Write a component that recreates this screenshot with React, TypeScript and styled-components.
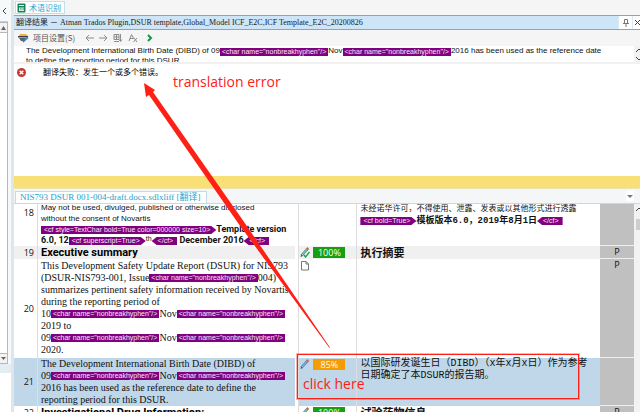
import React from "react";
import styled, { createGlobalStyle, css } from "styled-components";

const CJK = '"Noto Sans CJK SC", sans-serif';
const SANS = `"Liberation Sans", ${CJK}`;
const NARROW = `Roboto, ${CJK}`;
const SERIF = '"Liberation Serif", "Noto Sans CJK SC", serif';
const MONO = '"Liberation Mono", "Noto Sans CJK SC", monospace';

const Global = createGlobalStyle`
  *, *::before, *::after { box-sizing: border-box; }
  html, body { margin: 0; overflow: hidden; }
  body { font-family: ${SANS}; font-size: 10px; line-height: 12px; color: #111; background: #f5f6f7; }
  button { font: inherit; color: inherit; border: 0; padding: 0; margin: 0; background: none; display: inline-flex; align-items: center; justify-content: center; }
  svg { display: block; flex: none; }
`;

const Window = styled.div`
  position: relative;
  display: flex;
  height: 100vh;
  overflow: hidden;
`;

/* ---- left side pane ---- */
const Side = styled.aside`
  flex: none;
  width: 14px;
  display: flex;
  flex-direction: column;
  background: #f6f8f9;
  border-right: 3px solid #dce6eb;
`;
const SideHead = styled.button`
  && { height: 22px; width: 8px; border-bottom: 1px solid #c9ced1; }
`;
const SideScroll = styled.div`
  flex: 1;
  width: 8px;
  display: flex;
  flex-direction: column;
  justify-content: space-between;
  background: #fff;
  border-right: 1px solid #b4b8bb;
`;
const SideArrow = styled.button`
  && { height: 11px; background: #f3f3f3; border: 1px solid #b4b8bb; border-width: 1px 0; }
`;
const SideFoot = styled.div`
  height: 48px;
  background: #fff;
  border-top: 9px solid #e4edf1;
`;

/* ---- main column ---- */
const Main = styled.main`
  flex: 1;
  min-width: 0;
  display: flex;
  flex-direction: column;
`;
const TopTabs = styled.div`
  flex: none;
  display: flex;
  height: 15px;
  padding: 1px 0 1px 1px;
  background: #f5f5f5;
`;
const TopTab = styled.button`
  && {
    gap: 3px;
    padding: 0 3px 0 1px;
    background: #fff;
    border: 1px solid #c3dfe8;
    color: #1f9fc9;
    font: 8px/12px ${CJK};
  }
`;
const TitleBar = styled.header`
  flex: none;
  display: flex;
  height: 15px;
  background: #cde5f7;
  border: solid #58b9dd;
  border-width: 1px 0;
  color: #222;
`;
const Title = styled.h1`
  flex: 1;
  margin: 0;
  padding-left: 2px;
  font: 8px/13px ${SERIF};
  white-space: nowrap;
`;
const TitleButton = styled.button<{ $w: number }>`
  && { width: ${(p) => p.$w}px; background: #fff; border-left: 1px solid #d8ecf5; }
`;
const Toolbar = styled.div`
  flex: none;
  display: flex;
  align-items: center;
  gap: 5px;
  height: 16px;
  padding: 0 4px;
  background: #f5f5f5;
  color: #555;
`;
const ToolButton = styled.button<{ $label?: boolean }>`
  && {
    gap: 4px;
    font: 8px/12px ${CJK};
    margin-right: ${(p) => (p.$label ? 5 : 0)}px;
  }
`;
const PreviewRow = styled.div`
  flex: none;
  display: flex;
  height: 16px;
  background: #f1f1f1;
`;
const Preview = styled.div`
  flex: 1;
  min-width: 0;
  height: 16px;
  overflow: hidden;
  padding-left: 12px;
  background: #fff;
  font: 8px/10px ${SANS};
  white-space: nowrap;
`;
const Spinner = styled.div`
  width: 6px;
  display: flex;
  flex-direction: column;
  justify-content: space-between;
  padding: 2px 0 1px 2px;
`;
const Messages = styled.section`
  flex: none;
  min-height: 114px;
  background: #fff;
  border-top: 2px solid #f1f1f1;
`;
const Message = styled.div`
  display: flex;
  align-items: center;
  gap: 17px;
  height: 16px;
  padding-left: 3px;
  font: 8px/12px ${CJK};
  color: #000;
`;
const Notice = styled.div`
  flex: none;
  height: 13px;
  background: #f8e077;
  border-bottom: 1px solid #eee3b4;
`;
const DocTabs = styled.div`
  flex: none;
  display: flex;
  align-items: flex-end;
  justify-content: space-between;
  height: 15px;
  padding-left: 1px;
  background: #f5f6f7;
  border-bottom: 1px solid #c3dbe4;
`;
const DocTab = styled.button`
  && {
    height: 12px;
    padding: 0 5px 0 4px;
    background: #fff;
    border: 1px solid #c3dbe4;
    border-bottom: 0;
    color: #1f9fc9;
    font: 9px/11px ${SERIF};
    white-space: nowrap;
  }
`;
const DocMenu = styled.button`
  && { width: 8px; height: 10px; margin: 0 6px 2px 0; background: #fff; }
`;
const Editor = styled.div`
  flex: 1;
  min-height: 0;
  display: grid;
  grid-template-columns: minmax(0, 1fr) 6px;
  overflow: hidden;
  background: #fff;
`;
const Scrollbar = styled.div`
  background: #f2f2f2;
  padding: 3px 0 0 2px;
`;
const Thumb = styled.div`
  height: 11px;
  margin-top: 7px;
  background: #cdcdcd;
`;

/* ---- segment grid ---- */
type Tone = "plain" | "grey" | "active";
const tones: Record<Tone, string> = { plain: "#fff", grey: "#f0f0f0", active: "#bfd7e9" };

const Grid = styled.table`
  width: 100%;
  table-layout: fixed;
  border-collapse: separate;
  border-spacing: 0;
`;
const Col = styled.col<{ $w?: string }>`
  width: ${(p) => p.$w ?? "auto"};
`;
const Row = styled.tr<{ $tone: Tone; $h: number }>`
  height: ${(p) => p.$h}px;
  td, th { background: ${(p) => tones[p.$tone]}; padding: 0; vertical-align: top; }
`;
const NumCell = styled.th<{ $top?: boolean }>`
  && {
    padding: ${(p) => (p.$top ? "6px" : "3px")} 3px 3px 0;
    vertical-align: ${(p) => (p.$top ? "top" : "middle")};
    border-right: 1px solid #ddd;
    font: 9px/6px "Open Sans", sans-serif;
    text-align: right;
  }
`;
const SourceCell = styled.td`
  && { padding-left: 3px; border-right: 3px solid #fff; }
`;
const StatusCell = styled.td`
  border: solid #ddd;
  border-width: 0 1px;
`;
const TargetCell = styled.td`
  && { padding-left: 3px; }
`;
const FlagCell = styled.td`
  && {
    background: #c0c0c0;
    border-bottom: 1px solid #eee;
    font: 9px/12px "Open Sans", sans-serif;
    text-align: center;
  }
`;
type Kind = "small" | "serif" | "heading" | "cjkSmall" | "cjk" | "cjkHeading";
const kinds = {
  small: css`font: 8px/11px ${SANS}; margin-top: -2px;`,
  serif: css`font: 10px/12px ${SERIF}; color: #111;`,
  heading: css`font: bold 11px/13px ${NARROW}; color: #000;`,
  cjkSmall: css`font: 8px/12px ${MONO}; margin-top: -1px;`,
  cjk: css`font: 10px/12px ${MONO};`,
  cjkHeading: css`font: bold 11px/13px ${CJK};`,
};
const Text = styled.div<{ $kind: Kind; $pad?: boolean }>`
  ${(p) => kinds[p.$kind]}
  padding-top: ${(p) => (p.$pad ? 1 : 0)}px;
  white-space: nowrap;
`;
const Bold = styled.b<{ $mono?: boolean }>`
  font: bold 9px/9px ${(p) => (p.$mono ? MONO : NARROW)};
`;
const Sup = styled.sup`
  display: inline-block;
  vertical-align: top;
  font-size: 7px;
  line-height: 8px;
`;
const Status = styled.div`
  display: flex;
  align-items: center;
  gap: 3px;
  height: 13px;
  padding-left: 1px;
`;
const Badge = styled.span<{ $c: string }>`
  width: 32px;
  height: 11px;
  background: ${(p) => p.$c};
  color: #fff;
  font: 9px/11px "Open Sans", sans-serif;
  text-align: center;
`;
const shapes = {
  mark: "none",
  open: "polygon(0 0, calc(100% - 5px) 0, 100% 50%, calc(100% - 5px) 100%, 0 100%)",
  close: "polygon(5px 0, 100% 0, 100% 100%, 5px 100%, 0 50%)",
};
const Tag = styled.span<{ $shape: keyof typeof shapes }>`
  display: inline-block;
  vertical-align: top;
  height: 8px;
  margin-top: 2px;
  padding: ${(p) => ({ mark: "0 2px", open: "0 6px 0 3px", close: "0 4px 0 6px" })[p.$shape]};
  background: #800080;
  clip-path: ${(p) => shapes[p.$shape]};
  color: #f6e9f6;
  font: 7px/8px ${SANS};
`;
const Nbh = () => <Tag $shape="mark">{'<char name="nonbreakhyphen"/>'}</Tag>;

/* ---- annotations drawn over the window ---- */
const Arrow = styled.svg`
  position: absolute;
  left: 140px;
  top: 80px;
  pointer-events: none;
`;
const Frame = styled.div`
  position: absolute;
  left: 297px;
  top: 354px;
  width: 282px;
  height: 45px;
  border: 1px solid #ff2015;
  outline: 1px solid rgba(255, 32, 21, 0.35);
  pointer-events: none;
`;
const Note = styled.span<{ $x: number; $y: number }>`
  position: absolute;
  left: ${(p) => p.$x}px;
  top: ${(p) => p.$y}px;
  color: #ff2015;
  font: 14px/18px "Open Sans", sans-serif;
  white-space: nowrap;
`;

/* ---- icons ---- */
const Chevron = ({ d, w = 6, h = 6, c = "#444", s = 1 }: { d: string; w?: number; h?: number; c?: string; s?: number }) => (
  <svg width={w} height={h} viewBox={`0 0 ${w} ${h}`} fill="none" stroke={c} strokeWidth={s}>
    <path d={d} />
  </svg>
);
const BookIcon = () => (
  <svg width="9" height="10" viewBox="0 0 9 10">
    <rect x="0.5" y="0.5" width="8" height="9" rx="1" fill="#16845a" />
    <path d="M2 2.500h5" stroke="#fff" />
    <path d="M2 4.500h5v3.500H2z" fill="#d5efe4" />
    <path d="M3 6h1.500M5.500 6H7" stroke="#16845a" />
  </svg>
);
const SettingsIcon = () => (
  <svg width="11" height="10" viewBox="0 0 11 10">
    <path d="M2 1h6l2 2H1z" fill="#e9b64d" />
    <path d="M0 3h10v1.500H0z" fill="#3b3f46" />
    <path d="M1 5h7l-2 3H3z" fill="#5c6168" />
    <path d="M5 9l5-4.500" stroke="#2f7fc9" strokeWidth="1.600" />
  </svg>
);
const GridIcon = () => (
  <svg width="10" height="10" viewBox="0 0 10 10" fill="none" stroke="#8d8d8d">
    <path d="M1 1.500h5v5H1zM1 4h5M3.500 1.500v5M7.500 1v7M6 6.500l1.500 2L9 6.500M1 8.500h5" />
  </svg>
);
const FormatIcon = () => (
  <svg width="10" height="10" viewBox="0 0 10 10" fill="none" stroke="#8d8d8d">
    <path d="M1 8l2.500-6.500L6 6M2 5.500h3M6 5l3 4M9 5L5.500 9" />
  </svg>
);
const ErrorIcon = () => (
  <svg width="9" height="9" viewBox="0 0 9 9">
    <circle cx="4.500" cy="4.500" r="4.500" fill="#c8352c" />
    <path d="M2.700 2.700l3.600 3.600M6.300 2.700L2.700 6.300" stroke="#fff" strokeWidth="1.400" />
  </svg>
);
const PinIcon = () => (
  <svg width="6" height="8" viewBox="0 0 6 8" fill="none" stroke="#777">
    <path d="M1.500 0.500h3v4h-3zM0 4.500h6M3 5v3" />
  </svg>
);
const PencilIcon = ({ done }: { done?: boolean }) => (
  <svg width="10" height="11" viewBox="0 0 10 11" fill="none">
    <path d="M1.500 8.500L7.500 1.800" stroke={done ? "#3f9c86" : "#4d86bd"} strokeWidth="2.600" />
    <path d="M2 8L7.500 1.800" stroke={done ? "#b8e0d2" : "#a9cdec"} strokeWidth="0.800" />
    <path d="M7 2.300L8.300 1" stroke="#d8604f" strokeWidth="2.600" />
    <path d="M0.500 9.800l0.600-2 1.500 1.400z" fill="#444" />
    {done && <path d="M4 8l1.500 2L9.500 5" stroke="#149a52" strokeWidth="1.300" />}
  </svg>
);
const PageIcon = () => (
  <svg width="10" height="11" viewBox="0 0 10 11" fill="#fff" stroke="#777">
    <path d="M1.500 1.500h4.500l2.500 2.500v6h-7zM6 1.500v2.500h2.500" />
  </svg>
);

export default function App() {
  return (
    <Window>
      <Global />
      <Side>
        <SideHead aria-label="Collapse">
          <Chevron d="M5 1L2 4l3 3" w={6} h={8} />
        </SideHead>
        <SideScroll>
          <SideArrow aria-label="Scroll up">
            <svg width="6" height="4"><path d="M0 4l2.500-4L5 4z" fill="#666" /></svg>
          </SideArrow>
          <SideArrow aria-label="Scroll down">
            <svg width="6" height="4"><path d="M0 0l2.500 3L5 0z" fill="#666" /></svg>
          </SideArrow>
        </SideScroll>
        <SideFoot />
      </Side>

      <Main>
        <TopTabs>
          <TopTab><BookIcon />术语识别</TopTab>
        </TopTabs>
        <TitleBar>
          <Title>翻译结果 － Atman Trados Plugin,DSUR template,Global_Model ICF_E2C,ICF Template_E2C_20200826</Title>
          <TitleButton $w={14} aria-label="Pin"><PinIcon /></TitleButton>
          <TitleButton $w={8} aria-label="Close"><Chevron d="M2 1l5 5M7 1L2 6" w={7} h={7} /></TitleButton>
        </TitleBar>
        <Toolbar>
          <ToolButton $label><SettingsIcon />项目设置(S)</ToolButton>
          <ToolButton aria-label="Back"><Chevron d="M9 4H1M4 1L1 4l3 3" w={9} h={8} c="#8d8d8d" /></ToolButton>
          <ToolButton aria-label="Forward"><Chevron d="M0 4h8M5 1l3 3-3 3" w={9} h={8} c="#8d8d8d" /></ToolButton>
          <ToolButton aria-label="Insert translation"><GridIcon /></ToolButton>
          <ToolButton aria-label="Formatting"><FormatIcon /></ToolButton>
          <ToolButton aria-label="Next"><Chevron d="M5 1l3 3-3 3" w={14} h={8} c="#159447" s={2} /></ToolButton>
        </Toolbar>
        <PreviewRow>
          <Preview>
            The Development International Birth Date (DIBD) of 09<Nbh />Nov<Nbh />2016 has been used as the reference date
            <br />
            to define the reporting period for this DSUR.
          </Preview>
          <Spinner>
            <Chevron d="M0 4l3-3 3 3" h={5} w={4} />
            <Chevron d="M0 1l3 3 3-3" h={5} w={4} />
          </Spinner>
        </PreviewRow>
        <Messages>
          <Message><ErrorIcon />翻译失败：发生一个或多个错误。</Message>
        </Messages>
        <Notice />
        <DocTabs>
          <DocTab>NIS793 DSUR 001-004-draft.docx.sdlxliff [翻译]</DocTab>
          <DocMenu aria-label="Documents">
            <svg width="6" height="3"><path d="M0 0h6L3 3z" fill="#777" /></svg>
          </DocMenu>
        </DocTabs>
        <Editor>
          <Grid>
            <colgroup>
              <Col $w="24px" />
              <Col $w="42%" />
              <Col $w="59px" />
              <Col />
              <Col $w="34px" />
            </colgroup>
            <tbody>
              <Row $tone="plain" $h={42}>
                <NumCell scope="row" $top>18</NumCell>
                <SourceCell>
                  <Text $kind="small">
                    May not be used, divulged, published or otherwise disclosed<br />
                    without the consent of Novartis<br />
                    <Tag $shape="open">{"<cf style=TextChar bold=True color=000000 size=10>"}</Tag>
                    <Bold>Template version</Bold><br />
                    <Bold>6.0, 12</Bold><Tag $shape="open">{"<cf superscript=True>"}</Tag>
                    <Sup>th</Sup><Tag $shape="close">{"</cf>"}</Tag><Bold> December 2016</Bold>
                    <Tag $shape="close">{"</cf>"}</Tag>
                  </Text>
                </SourceCell>
                <StatusCell />
                <TargetCell>
                  <Text $kind="cjkSmall">
                    未经诺华许可，不得使用、泄露、发表或以其他形式进行透露<br />
                    <Tag $shape="open">{"<cf bold=True>"}</Tag><Bold $mono>模板版本6.0，2019年8月1日</Bold>
                    <Tag $shape="close">{"</cf>"}</Tag>
                  </Text>
                </TargetCell>
                <FlagCell />
              </Row>
              <Row $tone="grey" $h={13}>
                <NumCell scope="row">19</NumCell>
                <SourceCell><Text $kind="heading">Executive summary</Text></SourceCell>
                <StatusCell><Status><PencilIcon done /><Badge $c="#14a00f">100%</Badge></Status></StatusCell>
                <TargetCell><Text $kind="cjkHeading">执行摘要</Text></TargetCell>
                <FlagCell>P</FlagCell>
              </Row>
              <Row $tone="plain" $h={99}>
                <NumCell scope="row">20</NumCell>
                <SourceCell>
                  <Text $kind="serif" $pad>
                    This Development Safety Update Report (DSUR) for NIS793<br />
                    (DSUR-NIS793-001, Issue<Nbh />004)<br />
                    summarizes pertinent safety information received by Novartis<br />
                    during the reporting period of<br />
                    10<Nbh />Nov<Nbh /><br />
                    2019 to<br />
                    09<Nbh />Nov<Nbh /><br />
                    2020.
                  </Text>
                </SourceCell>
                <StatusCell><Status><PageIcon /></Status></StatusCell>
                <TargetCell />
                <FlagCell>P</FlagCell>
              </Row>
              <Row $tone="active" $h={48}>
                <NumCell scope="row">21</NumCell>
                <SourceCell>
                  <Text $kind="serif">
                    The Development International Birth Date (DIBD) of<br />
                    09<Nbh />Nov<Nbh /><br />
                    2016 has been used as the reference date to define the<br />
                    reporting period for this DSUR.
                  </Text>
                </SourceCell>
                <StatusCell><Status><PencilIcon /><Badge $c="#f59c00">85%</Badge></Status></StatusCell>
                <TargetCell>
                  <Text $kind="cjk">
                    以国际研发诞生日（DIBD）（x年x月x日）作为参考<br />
                    日期确定了本DSUR的报告期。
                  </Text>
                </TargetCell>
                <FlagCell />
              </Row>
              <Row $tone="plain" $h={14}>
                <NumCell scope="row">22</NumCell>
                <SourceCell><Text $kind="heading">Investigational Drug Information:</Text></SourceCell>
                <StatusCell><Status><PencilIcon done /><Badge $c="#14a00f">100%</Badge></Status></StatusCell>
                <TargetCell><Text $kind="cjkHeading">试验药物信息</Text></TargetCell>
                <FlagCell>P</FlagCell>
              </Row>
            </tbody>
          </Grid>
          <Scrollbar>
            <Chevron d="M0 4l3-3 3 3" h={5} w={4} />
            <Thumb />
          </Scrollbar>
        </Editor>
      </Main>

      <Arrow width="194" height="272" viewBox="0 0 194 272" fill="#ff2015">
        <path d="M4 3L15 10L13 12L102 139L190 267.500L189.500 268L98 143L9 15L6 17z" />
      </Arrow>
      <Frame />
      <Note $x={173} $y={73}>translation error</Note>
      <Note $x={303} $y={375}>click here</Note>
    </Window>
  );
}
